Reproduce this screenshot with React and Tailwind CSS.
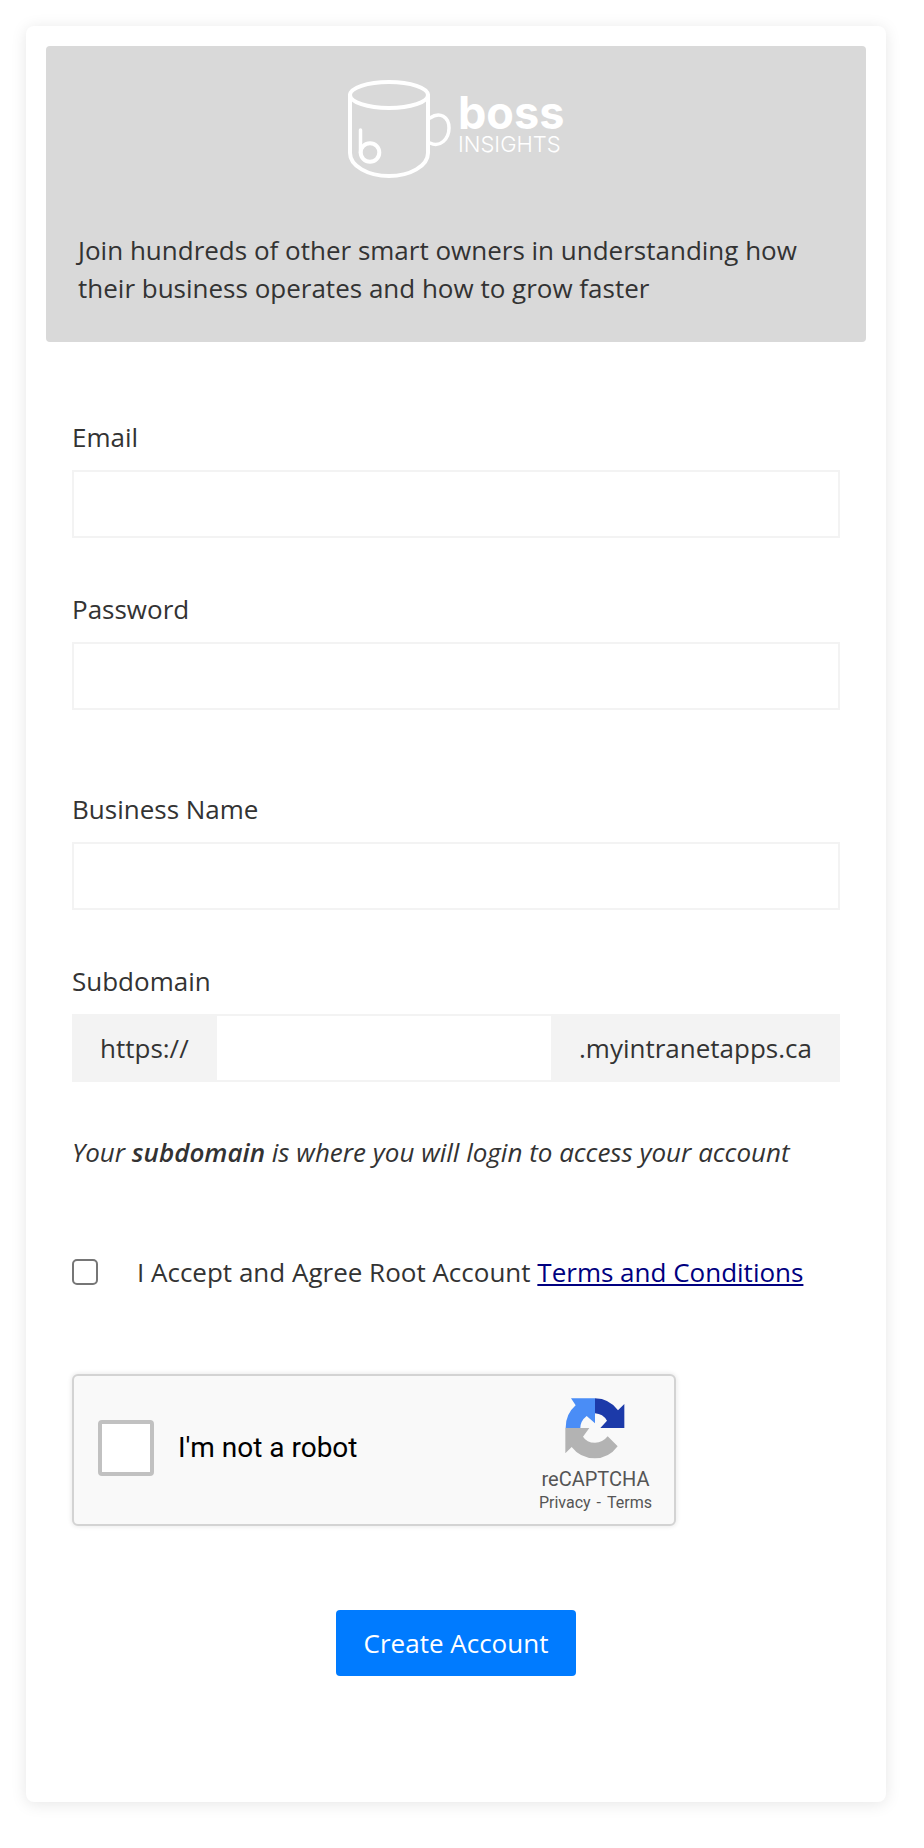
import React, { useState } from 'react';

const BossInsightsLogo = () => (
  <svg className="w-[216px] h-[98px]" viewBox="0 0 216 98" fill="none" role="img" aria-label="Boss Insights">
    {/* mug */}
    <g stroke="#fff" strokeWidth="4" strokeLinecap="round">
      <ellipse cx="41" cy="15" rx="39" ry="13" />
      <path d="M2 15V73C2 86 20 96 41 96S80 86 80 73V15" />
      <path d="M82 38C92 31 101 37 101 48S92 68 82 63" strokeWidth="3.5" />
      <path d="M12.5 50V73" strokeWidth="3.5" />
      <circle cx="22" cy="72.5" r="9.3" />
    </g>
    <text x="110" y="49" fill="#fff" fontSize="45" fontWeight="700" fontFamily="Inter, sans-serif">boss</text>
    <text x="110" y="72" fill="#fff" fontSize="22" fontWeight="300" fontFamily="Inter, sans-serif">INSIGHTS</text>
  </svg>
);

const RecaptchaLogo = () => (
  <svg className="w-[60px] h-[61px]" viewBox="199 114 180 183" aria-hidden="true">
    <path fill="#4a8df6" d="M201 204A88 88 0 0 1 231 136L217 115H289V190L264 168Q245 183 245 204Z" />
    <path fill="#1c3aa9" d="M289 115A88 88 0 0 1 358 151L377 132V204H305L325 182A46 46 0 0 0 289 160Z" />
    <path fill="#b3b3b3" d="M200 204H272L253 230Q264 248 289 248Q312 248 327 229L357 259Q330 295 289 295Q245 295 219 261L200 280Z" />
  </svg>
);

const TextField = ({ id, label, type = 'text', value, onChange }) => (
  <div className="flex flex-col gap-3.5">
    <label htmlFor={id}>{label}</label>
    <input
      id={id}
      name={id}
      type={type}
      value={value}
      onChange={onChange}
      className="w-full h-[68px] px-7 border-2 border-[#f3f3f3] bg-white outline-none focus:border-[#007bff]"
    />
  </div>
);

const Recaptcha = ({ checked, onChange }) => (
  <div className="flex justify-between w-full max-w-[604px] h-[152px] pl-6 pr-[22px] rounded-md border-2 border-[#d3d3d3] bg-[#f9f9f9] shadow-[0_0_4px_1px_rgba(0,0,0,0.08)] font-[Roboto,sans-serif]">
    <div className="flex items-center gap-6 pb-1">
      <input
        id="robot"
        type="checkbox"
        checked={checked}
        onChange={onChange}
        className="appearance-none shrink-0 size-14 rounded border-4 border-[#c1c1c1] bg-white checked:bg-[#4a8df6]"
      />
      <label htmlFor="robot" className="text-[28px] text-black">I'm not a robot</label>
    </div>
    <div className="flex flex-col items-center pt-[22px] text-[#555]">
      <RecaptchaLogo />
      <span className="mt-1.5 text-xl leading-7">reCAPTCHA</span>
      <div className="flex gap-1.5 text-base leading-5">
        <a href="#privacy">Privacy</a>
        <span>-</span>
        <a href="#terms">Terms</a>
      </div>
    </div>
  </div>
);

const App = () => {
  const [form, setForm] = useState({
    email: '',
    password: '',
    business_name: '',
    subdomain: '',
    accepted: false,
    human: false
  });

  const handleChange = (key) => (e) => {
    const value = e.target.type === 'checkbox' ? e.target.checked : e.target.value;
    setForm({ ...form, [key]: value });
  };

  return (
    <main className="bg-white pt-[26px] pb-[46px] pl-[26px] pr-[38px] font-['Open_Sans',sans-serif] text-[26px] leading-[38px] text-[#333]">
      <div className="p-5 rounded-lg bg-white shadow-[0_2px_16px_rgba(0,0,0,0.1)]">
        <header className="flex flex-col gap-[53px] px-8 pt-[34px] pb-[35px] rounded bg-[#d9d9d9]">
          <div className="flex justify-center">
            <BossInsightsLogo />
          </div>
          <p>Join hundreds of other smart owners in understanding how their business operates and how to grow faster</p>
        </header>

        <form className="px-[26px] pt-[76px] pb-[106px]" onSubmit={(e) => e.preventDefault()}>
          <div className="flex flex-col gap-[52px]">
            <TextField id="email" label="Email" type="email" value={form.email} onChange={handleChange('email')} />
            <TextField id="password" label="Password" type="password" value={form.password} onChange={handleChange('password')} />
          </div>

          <div className="flex flex-col gap-[52px] mt-20">
            <TextField id="business_name" label="Business Name" value={form.business_name} onChange={handleChange('business_name')} />
            <div className="flex flex-col gap-3.5">
              <label htmlFor="subdomain">Subdomain</label>
              <div className="flex h-[68px] border-2 border-[#f3f3f3]">
                <span className="flex items-center pl-[26px] pr-7 bg-[#f3f3f3]">https://</span>
                <input
                  id="subdomain"
                  name="subdomain"
                  type="text"
                  value={form.subdomain}
                  onChange={handleChange('subdomain')}
                  className="flex-1 min-w-0 px-7 bg-white outline-none"
                />
                <span className="flex items-center pl-7 pr-[26px] bg-[#f3f3f3]">.myintranetapps.ca</span>
              </div>
            </div>
          </div>

          <p className="mt-[51px] italic">
            Your <strong className="font-semibold">subdomain</strong> is where you will login to access your account
          </p>

          <div className="flex items-center gap-[39px] mt-[82px]">
            <input
              id="accepted"
              type="checkbox"
              checked={form.accepted}
              onChange={handleChange('accepted')}
              className="appearance-none shrink-0 size-[26px] rounded-[5px] border-2 border-[#767676] bg-white checked:bg-[#007bff]"
            />
            <div>
              <label htmlFor="accepted">I Accept and Agree Root Account</label>{' '}
              <a href="#terms-and-conditions" className="text-[#000080] underline">Terms and Conditions</a>
            </div>
          </div>

          <div className="mt-[83px]">
            <Recaptcha checked={form.human} onChange={handleChange('human')} />
          </div>

          <div className="flex justify-center mt-21">
            <button type="submit" className="h-[66px] px-7 rounded bg-[#007bff] text-white">Create Account</button>
          </div>
        </form>
      </div>
    </main>
  );
};

export default App;
